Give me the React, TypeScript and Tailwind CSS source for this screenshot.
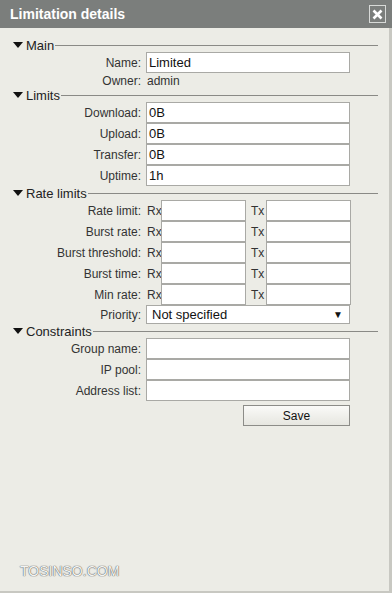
import React from "react";

const font = { fontFamily: '"Liberation Sans", Arial, sans-serif' };

function Section({ title }: { title: string }) {
  return (
    <div className="flex h-[14px] items-center pl-[13px] pr-[11px]">
      <svg width="10" height="6" viewBox="0 0 10 6" className="mr-[3px] shrink-0">
        <path d="M0 0 L10 0 L5 6 Z" fill="#111" />
      </svg>
      <span className="text-[13px] leading-none text-[#222]">{title}</span>
      <div className="ml-[1px] h-px flex-1 bg-[#8a8a86]" />
    </div>
  );
}

function Label({ text }: { text: string }) {
  return (
    <div className="w-[146px] shrink-0 pr-[5px] text-right text-[12px] text-[#333]">{text}</div>
  );
}

function Field({ label, value = "" }: { label: string; value?: string }) {
  return (
    <div className="flex h-[21px] items-center">
      <Label text={label} />
      <div className="flex h-[21px] w-[204px] items-center border border-[#a9a9a5] bg-white px-[2px] text-[13px] text-[#111]">
        {value}
      </div>
    </div>
  );
}

function RateRow({ label }: { label: string }) {
  return (
    <div className="flex h-[21px] items-center">
      <Label text={label} />
      <div className="w-[15px] pl-[1px] text-[12px] text-[#333]">Rx</div>
      <div className="h-[21px] w-[85px] border border-[#a9a9a5] bg-white" />
      <div className="w-[20px] pl-[5px] text-[12px] text-[#333]">Tx</div>
      <div className="h-[21px] w-[85px] border border-[#a9a9a5] bg-white" />
    </div>
  );
}

export default function App() {
  return (
    <div style={font} className="flex h-[593px] w-[392px] flex-col overflow-hidden bg-[#ecece6]">
      <div className="flex h-[28px] shrink-0 items-center justify-between bg-[#7b7e7c] pl-[10px] pr-[6px]">
        <span className="text-[14px] font-bold text-white">Limitation details</span>
        <div className="flex h-[18px] w-[17px] items-center justify-center border border-[#d8dad8]">
          <svg width="11" height="11" viewBox="0 0 11 11">
            <path d="M1.5 1.5 L9.5 9.5 M9.5 1.5 L1.5 9.5" stroke="#fff" strokeWidth="2.6" />
          </svg>
        </div>
      </div>

      <div className="flex flex-1 flex-col border-b-2 border-r-[3px] border-[#c8c8c2] pt-[10px]">
        <Section title="Main" />
        <Field label="Name:" value="Limited" />
        <div className="flex h-[15px] items-center">
          <Label text="Owner:" />
          <span className="pl-[1px] text-[12px] text-[#333]">admin</span>
        </div>

        <Section title="Limits" />
        <Field label="Download:" value="0B" />
        <Field label="Upload:" value="0B" />
        <Field label="Transfer:" value="0B" />
        <Field label="Uptime:" value="1h" />

        <Section title="Rate limits" />
        <RateRow label="Rate limit:" />
        <RateRow label="Burst rate:" />
        <RateRow label="Burst threshold:" />
        <RateRow label="Burst time:" />
        <RateRow label="Min rate:" />
        <div className="flex h-[19px] items-center">
          <Label text="Priority:" />
          <div className="flex h-[19px] w-[204px] items-center justify-between border border-[#a9a9a5] bg-white pl-[5px] pr-[6px] text-[13px] text-[#111]">
            <span>Not specified</span>
            <span className="text-[10px]">▼</span>
          </div>
        </div>

        <Section title="Constraints" />
        <Field label="Group name:" />
        <Field label="IP pool:" />
        <Field label="Address list:" />

        <div className="mt-[4px] flex pl-[243px]">
          <button className="h-[21px] w-[107px] border border-[#8c8c88] bg-gradient-to-b from-[#fafaf8] to-[#e6e6e0] text-[12px] text-[#111]">
            Save
          </button>
        </div>

        <div className="mt-auto pb-[9px] pl-[20px] text-[14px] text-[#f4f4f2] [text-shadow:0_0_1px_#555,0_0_1px_#555]">
          TOSINSO.COM
        </div>
      </div>
    </div>
  );
}
